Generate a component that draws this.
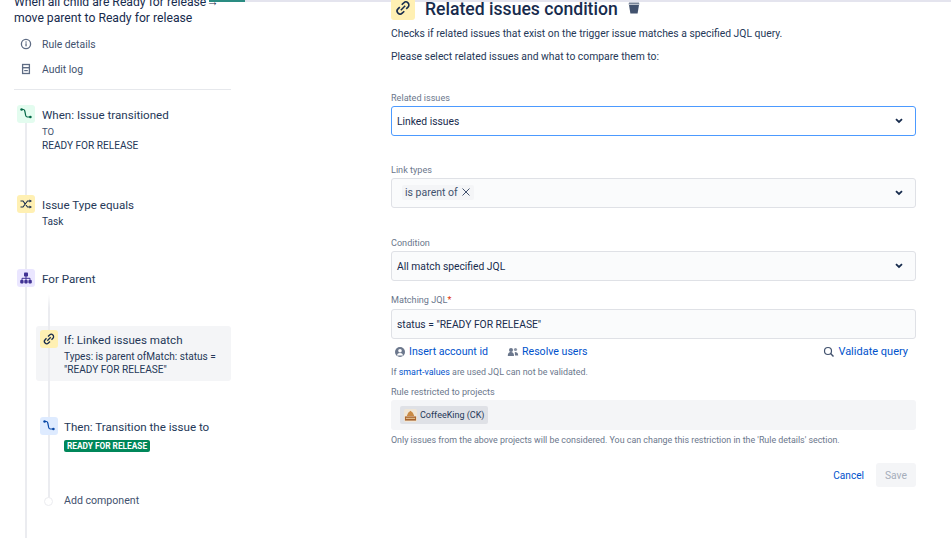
<div class="page">
  <aside class="side">
    <h2 class="rule-title">When all child are Ready for release→<br />move parent to Ready for release</h2>
    <nav class="links">
      <div class="link">
        <svg width="16" height="16" viewBox="0 0 16 16"><circle cx="8" cy="8" r="4.600" fill="none" stroke="#5e6c84" stroke-width="1.300"/><rect x="7.400" y="7.300" width="1.300" height="3" fill="#5e6c84"/><rect x="7.400" y="5.400" width="1.300" height="1.300" fill="#5e6c84"/></svg>
        <span>Rule details</span>
      </div>
      <div class="link">
        <svg width="16" height="16" viewBox="0 0 16 16"><rect x="4.600" y="3.500" width="6.800" height="9" fill="none" stroke="#5e6c84" stroke-width="1.300"/><rect x="4.600" y="6" width="6.800" height="1.400" fill="#5e6c84"/><rect x="6.200" y="9" width="3.600" height="1.200" fill="#5e6c84"/></svg>
        <span>Audit log</span>
      </div>
    </nav>
    <hr class="sep" />
    <div class="flow">
      <div class="rail"></div>
      <div class="step s1">
        <span class="ic green">
          <svg width="14" height="14" viewBox="0 0 14 14"><path d="M2.500 2.500h1.800c1 0 1.300.6 1.500 1.500l.9 4.500c.2 1 .7 1.500 1.700 1.500h2.600" fill="none" stroke="#006644" stroke-width="1.200"/><circle cx="2.600" cy="2.500" r="1.300" fill="#006644"/><circle cx="11.400" cy="10" r="1.300" fill="#006644"/></svg>
        </span>
        <div class="txt">
          <div class="name">When: Issue transitioned</div>
          <div class="sub to">TO</div>
          <div class="sub">READY FOR RELEASE</div>
        </div>
      </div>
      <div class="step s2">
        <span class="ic yellow">
          <svg width="14" height="14" viewBox="0 0 14 14"><path d="M1.500 4h2.500l4.500 6h2.500M1.500 10h2.500l4.500-6h2.500" fill="none" stroke="#172b4d" stroke-width="1.100"/><path d="M10.500 2.400 13 4l-2.500 1.600zM10.500 8.400 13 10l-2.500 1.600z" fill="#172b4d"/></svg>
        </span>
        <div class="txt">
          <div class="name">Issue Type equals</div>
          <div class="sub task">Task</div>
        </div>
      </div>
      <div class="step s3">
        <span class="ic purple">
          <svg width="14" height="14" viewBox="0 0 14 14"><rect x="5" y="1.500" width="4" height="4" rx=".8" fill="#403294"/><rect x="1.200" y="9" width="3.400" height="3.400" rx=".8" fill="#403294"/><rect x="5.300" y="9" width="3.400" height="3.400" rx=".8" fill="#403294"/><rect x="9.400" y="9" width="3.400" height="3.400" rx=".8" fill="#403294"/><path d="M3 9V7.300h8V9M7 5v4" fill="none" stroke="#403294" stroke-width="1"/></svg>
        </span>
        <div class="txt"><div class="name">For Parent</div></div>
      </div>
      <div class="branch">
        <div class="rail2"></div>
        <div class="step active">
          <span class="ic yellow">
            <svg width="14" height="14" viewBox="0 0 14 14"><g fill="none" stroke="#172b4d" stroke-width="1.300"><path d="M6 4.500 7.600 3a2.300 2.300 0 0 1 3.300 3.300L9.500 7.700"/><path d="M8 9.500 6.400 11a2.300 2.300 0 0 1-3.300-3.300l1.400-1.400"/><path d="M5.300 8.700 8.700 5.300"/></g></svg>
          </span>
          <div class="txt">
            <div class="name">If: Linked issues match</div>
            <div class="sub wrap">Types: is parent ofMatch: status = "READY FOR RELEASE"</div>
          </div>
        </div>
        <div class="step then">
          <span class="ic blue">
            <svg width="14" height="14" viewBox="0 0 14 14"><path d="M2.500 2.500h1.800c1 0 1.300.6 1.500 1.500l.9 4.500c.2 1 .7 1.500 1.700 1.500h2.600" fill="none" stroke="#0747a6" stroke-width="1.200"/><circle cx="2.600" cy="2.500" r="1.300" fill="#0747a6"/><circle cx="11.400" cy="10" r="1.300" fill="#0747a6"/></svg>
          </span>
          <div class="txt">
            <div class="name">Then: Transition the issue to</div>
            <span class="lozenge">READY FOR RELEASE</span>
          </div>
        </div>
        <div class="step add">
          <span class="dot"></span>
          <div class="addtext">Add component</div>
        </div>
      </div>
    </div>
  </aside>

  <main class="form">
    <header class="head">
      <span class="ic big yellow">
        <svg width="18" height="18" viewBox="0 0 14 14"><g fill="none" stroke="#172b4d" stroke-width="1.200"><path d="M6 4.500 7.600 3a2.300 2.300 0 0 1 3.300 3.300L9.500 7.700"/><path d="M8 9.500 6.400 11a2.300 2.300 0 0 1-3.300-3.300l1.400-1.400"/><path d="M5.300 8.700 8.700 5.300"/></g></svg>
      </span>
      <h1>Related issues condition</h1>
      <svg class="trash" width="12" height="12" viewBox="0 0 12 12"><path d="M1 0.500h10l.5 2h-11z" fill="#7a869a"/><path d="M1 3h10l-1.400 8.500H2.400z" fill="#42526e"/></svg>
    </header>
    <p class="p1">Checks if related issues that exist on the trigger issue matches a specified JQL query.</p>
    <p class="p2">Please select related issues and what to compare them to:</p>

    <div class="lab l1">Related issues</div>
    <div class="field focus">
      <span>Linked issues</span>
      <svg class="chev" width="8" height="6" viewBox="0 0 8 6"><path d="M1 1.200 4 4l3-2.800" fill="none" stroke="#172b4d" stroke-width="1.800"/></svg>
    </div>

    <div class="lab l2">Link types</div>
    <div class="field multi">
      <span class="tag">is parent of <svg width="10" height="10" viewBox="0 0 10 10"><path d="M1.500 1.500l7 7M8.500 1.500l-7 7" stroke="#42526e" stroke-width="1"/></svg></span>
      <svg class="chev" width="8" height="6" viewBox="0 0 8 6"><path d="M1 1.200 4 4l3-2.800" fill="none" stroke="#172b4d" stroke-width="1.800"/></svg>
    </div>

    <div class="lab l3">Condition</div>
    <div class="field">
      <span>All match specified JQL</span>
      <svg class="chev" width="8" height="6" viewBox="0 0 8 6"><path d="M1 1.200 4 4l3-2.800" fill="none" stroke="#172b4d" stroke-width="1.800"/></svg>
    </div>

    <div class="lab l4">Matching JQL<span class="req">*</span></div>
    <div class="field jql">
      <span>status = "READY FOR RELEASE"</span>
    </div>

    <div class="actions">
      <span class="act"><svg width="12" height="12" viewBox="0 0 12 12"><circle cx="6" cy="6" r="5" fill="#6b778c"/><circle cx="6" cy="4.700" r="1.800" fill="#fff"/><path d="M2.800 9.500a3.300 3.300 0 0 1 6.400 0" fill="#fff"/></svg><a>Insert account id</a></span>
      <span class="act a2"><svg width="12" height="12" viewBox="0 0 12 12"><circle cx="4" cy="4" r="2" fill="#6b778c"/><circle cx="8.500" cy="3.500" r="1.600" fill="#8993a4"/><path d="M.8 10c0-3 1.400-4 3.200-4s3 1 3 4zM7.800 6c2 0 3.400.6 3.400 3.400H8z" fill="#6b778c"/></svg><a>Resolve users</a></span>
      <span class="act a3"><svg width="12" height="12" viewBox="0 0 12 12"><circle cx="5" cy="5" r="3.500" fill="none" stroke="#42526e" stroke-width="1.200"/><path d="M7.600 7.600 10.500 10.500" stroke="#42526e" stroke-width="1.400"/></svg><a>Validate query</a></span>
    </div>

    <p class="hint h1">If <a>smart-values</a> are used JQL can not be validated.</p>
    <div class="lab l5">Rule restricted to projects</div>
    <div class="projects">
      <span class="chip">
        <svg width="13" height="13" viewBox="0 0 14 14"><rect width="14" height="14" rx="2" fill="#f0e6d6"/><path d="M1 8h12v4.500H1z" fill="#a8622a"/><path d="M3 7.500l1.500-3.500 2.500-2 2.500 2L11 7.500z" fill="#c98a45"/><rect x="2" y="9.500" width="10" height="1" fill="#f2d9a8"/></svg>
        CoffeeKing (CK)
      </span>
    </div>
    <p class="hint h2">Only issues from the above projects will be considered. You can change this restriction in the 'Rule details' section.</p>
    <div class="buttons">
      <a class="cancel">Cancel</a>
      <span class="save">Save</span>
    </div>
  </main>
</div>

<style>
  :global(body) { margin: 0; background: #fff; }
  .page {
    width: 951px; height: 538px; overflow: hidden; position: relative;
    display: grid; grid-template-columns: 217px 525px; column-gap: 160px;
    padding-left: 14px; box-sizing: border-box;
    font-family: Roboto, "Noto Sans", sans-serif; color: #172b4d; font-size: 11px;
  }
  .page::before { content: ""; position: absolute; left: 209px; right: 0; top: 0; height: 2px; background: #e4e4ee; }
  .page::after { content: ""; position: absolute; left: 209px; width: 36px; top: 0; height: 2px; background: #2a8c82; }
  .side { margin-top: -6px; min-width: 0; }
  .rule-title { margin: 0; font-size: 12.200px; font-weight: 400; line-height: 16px; color: #172b4d; white-space: nowrap; }
  .links { margin-top: 10px; padding-left: 4px; display: flex; flex-direction: column; gap: 9px; }
  .link { display: flex; align-items: center; gap: 8px; height: 16px; color: #42526e; font-size: 10.400px; }
  .sep { margin: 12px 0 0; border: 0; border-top: 1px solid #e6e8ec; }
  .flow { position: relative; padding-top: 15px; }
  .rail { position: absolute; left: 11px; top: 33px; height: 500px; width: 2px; background: #ebecf0; }
  .step { display: flex; gap: 7px; position: relative; }
  .ic { width: 18px; height: 18px; border-radius: 3px; display: flex; align-items: center; justify-content: center; flex: none; margin-left: 3px; position: relative; z-index: 2; }
  .green { background: #e3fcef; }
  .yellow { background: #fff0b3; }
  .purple { background: #eae6ff; }
  .blue { background: #deebff; }
  .txt { padding-top: 1px; min-width: 0; }
  .name { font-size: 11.600px; line-height: 18px; color: #253858; white-space: nowrap; }
  .sub { font-size: 10.100px; line-height: 14px; color: #253858; }
  .to { font-size: 9.500px; color: #42526e; margin-top: 1px; }
  .task { margin-top: 1px; }
  .s2 { margin-top: 42px; }
  .s3 { margin-top: 40px; }
  .branch { position: relative; margin-left: 22px; padding-top: 38px; }
  .rail2 { position: absolute; left: 12px; top: 6px; height: 205px; width: 2px; background: linear-gradient(#fff, #ebecf0 14px); z-index: 1; }
  .active { background: #f4f5f7; border-radius: 3px; padding: 4px 4px 5px 4px; gap: 6px; }
  .active .ic { margin-left: 0; }
  .wrap { line-height: 13px; margin-top: 1px; }
  .then { margin-top: 36px; padding-left: 4px; gap: 6px; }
  .then .ic { margin-left: 0; }
  .lozenge { display: block; width: fit-content; background: #00875a; color: #fff; font-size: 8.300px; font-weight: 700; line-height: 12px; border-radius: 2px; padding: 0 3px; margin-top: 4px; white-space: nowrap; }
  .add { margin-top: 42px; padding-left: 8px; align-items: center; gap: 11px; }
  .dot { width: 9px; height: 9px; box-sizing: border-box; border-radius: 50%; border: 1px solid #ebecf0; background: #fff; flex: none; z-index: 2; }
  .addtext { font-size: 10.600px; line-height: 14px; color: #42526e; }

  .form { display: flex; flex-direction: column; margin-top: -6px; min-width: 0; }
  .head { display: flex; align-items: center; height: 28px; flex: none; }
  .big { width: 24px; height: 24px; margin-left: 0; }
  h1 { font-size: 17.600px; font-weight: 500; margin: 1px 10px 0 10px; color: #172b4d; white-space: nowrap; }
  .trash { margin-top: -1px; }
  p { margin: 0; }
  .p1 { margin-top: 5px; font-size: 10.350px; line-height: 14px; color: #253858; white-space: nowrap; }
  .p2 { margin-top: 9px; font-size: 10.350px; line-height: 14px; color: #253858; }
  .lab { font-size: 9.100px; line-height: 12px; color: #6b778c; }
  .l1 { margin-top: 28px; }
  .l2 { margin-top: 28px; }
  .l3 { margin-top: 29px; }
  .l4 { margin-top: 13px; }
  .l5 { margin-top: 8px; }
  .req { color: #de350b; }
  .field { margin-top: 2px; height: 30px; flex: none; box-sizing: border-box; border: 1px solid #dfe1e6; border-radius: 3px; background: #fafbfc; display: flex; align-items: center; justify-content: space-between; padding: 0 12px 0 5px; font-size: 10.300px; color: #172b4d; }
  .jql { margin-top: 3px; }
  .focus { border-color: #4c9aff; background: #fff; }
  .tag { background: #f4f5f7; border-radius: 2px; padding: 0 3px; margin: 0 0 2px 5px; height: 15px; display: flex; align-items: center; gap: 3px; color: #42526e; font-size: 10.500px; }
  .chev { flex: none; }
  .actions { display: flex; align-items: center; margin-top: 4px; height: 17px; padding-left: 3px; flex: none; }
  .act { display: flex; align-items: center; gap: 3px; font-size: 10.600px; }
  .act a { color: #0052cc; }
  .a2 { margin-left: 19px; }
  .a3 { margin-left: auto; margin-right: 8px; font-size: 11px; }
  .hint { font-size: 8.900px; line-height: 12px; color: #6b778c; white-space: nowrap; }
  .hint a { color: #0052cc; }
  .h1 { margin-top: 6px; }
  .h2 { margin-top: 4px; }
  .projects { margin-top: 2px; height: 30px; flex: none; background: #f4f5f7; border-radius: 3px; display: flex; align-items: center; padding-left: 9px; }
  .chip { background: #dfe1e6; border-radius: 2px; height: 18px; padding: 0 3px 0 4px; display: flex; align-items: center; gap: 3px; font-size: 9px; color: #253858; }
  .buttons { display: flex; justify-content: flex-end; align-items: center; gap: 12px; margin-top: 17px; }
  .cancel { color: #0052cc; font-size: 10.100px; }
  .save { background: #f4f5f7; color: #a5adba; font-size: 10.300px; width: 40px; height: 24px; display: flex; align-items: center; justify-content: center; border-radius: 3px; }
</style>
